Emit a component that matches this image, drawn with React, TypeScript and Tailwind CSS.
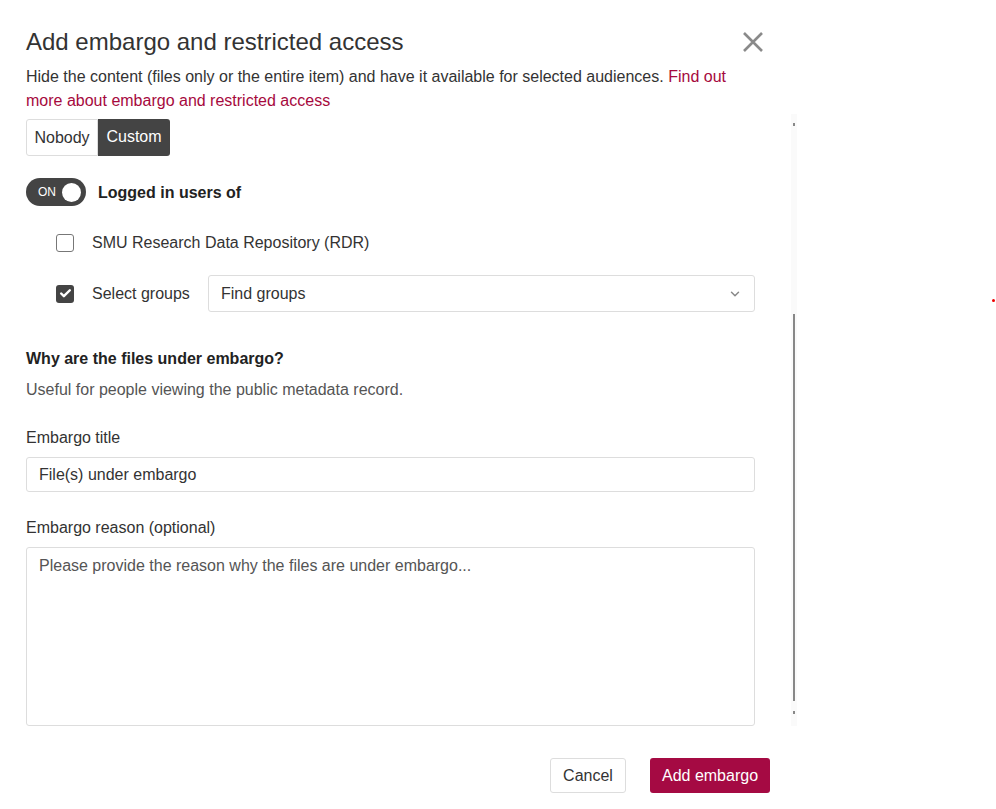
import { Check, ChevronDown } from 'lucide-react';

const font = { fontFamily: '"Liberation Sans", Arial, sans-serif' };

export default function App() {
  return (
    <div className="relative h-[809px] w-full bg-white text-[#333]" style={font}>
      {/* stray red dot in the page */}
      <span className="absolute left-[992px] top-[299px] h-[3px] w-[3px] rounded-full bg-[#e00]" />

      <div className="w-[797px] pl-[26px] pt-[27px]">
        {/* Header */}
        <div className="flex w-[738px] items-center justify-between">
          <h2 className="text-[24px] leading-[30px] text-[#333]">Add embargo and restricted access</h2>
          <button type="button" aria-label="Close" className="text-[#8a8a8a]">
            <svg width="22" height="22" viewBox="0 0 22 22">
              <path d="M2 2 L20 20 M20 2 L2 20" stroke="currentColor" strokeWidth="2.6" />
            </svg>
          </button>
        </div>
        <p className="mt-[8px] w-[720px] text-[16px] leading-[24px]">
          Hide the content (files only or the entire item) and have it available for selected audiences.{' '}
          <span className="text-[#a6093d]">Find out more about embargo and restricted access</span>
        </p>

        {/* Scrollable body */}
        <div className="flex">
          <div className="w-[729px]">
            <div className="mt-[6px] flex h-[37px] text-[16px]">
              <button type="button" className="w-[72px] rounded-l-[3px] border border-[#ddd] bg-white text-[#333]">
                Nobody
              </button>
              <button type="button" className="w-[72px] rounded-r-[3px] bg-[#444] pb-[2px] text-white">
                Custom
              </button>
            </div>

            <div className="mt-[22px] flex items-center gap-[12px]">
              <div className="flex h-[28px] w-[60px] items-center justify-between rounded-full bg-[#444] pl-[12px] pr-[5px]">
                <span className="text-[12px] text-white">ON</span>
                <span className="h-[19px] w-[19px] rounded-full bg-white" />
              </div>
              <span className="pt-[1px] text-[16px] font-bold text-[#222]">Logged in users of</span>
            </div>

            <div className="mt-[25px] flex h-[24px] items-center pl-[30px]">
              <span className="h-[18px] w-[18px] rounded-[3px] border border-[#777] bg-white" />
              <span className="ml-[18px] text-[16px]">SMU Research Data Repository (RDR)</span>
            </div>

            <div className="mt-[20px] flex items-center pl-[30px]">
              <span className="flex h-[18px] w-[18px] shrink-0 items-center justify-center rounded-[3px] bg-[#444]">
                <Check className="h-[13px] w-[13px] text-white" strokeWidth={4.5} />
              </span>
              <span className="ml-[18px] w-[116px] shrink-0 text-[16px]">Select groups</span>
              <div className="flex h-[37px] flex-1 items-center justify-between rounded-[3px] border border-[#ddd] pl-[12px] pr-[12px]">
                <span className="text-[16px]">Find groups</span>
                <ChevronDown className="h-[14px] w-[14px] text-[#888]" strokeWidth={2.5} />
              </div>
            </div>

            <h3 className="mt-[35px] text-[16px] font-bold leading-[24px] text-[#222]">
              Why are the files under embargo?
            </h3>
            <p className="mt-[7px] text-[16px] leading-[24px] text-[#555]">
              Useful for people viewing the public metadata record.
            </p>

            <label className="mt-[24px] block text-[16px] leading-[24px]">Embargo title</label>
            <div className="mt-[7px] flex h-[35px] items-center rounded-[3px] border border-[#ddd] px-[12px] text-[16px]">
              File(s) under embargo
            </div>

            <label className="mt-[24px] block text-[16px] leading-[24px]">Embargo reason (optional)</label>
            <div className="mt-[7px] h-[179px] rounded-[3px] border border-[#ddd] px-[12px] pt-[7px] text-[16px] leading-[22px] text-[#555]">
              Please provide the reason why the files are under embargo...
            </div>
          </div>

          {/* scrollbar */}
          <div className="ml-[36px] mt-[1px] flex w-[6px] flex-col items-center bg-[#fafafa]">
            <span className="mt-[9px] h-[3px] w-[2px] bg-[#888]" />
            <span className="mt-[188px] h-[387px] w-[2px] bg-[#888]" />
            <span className="mt-[10px] h-[3px] w-[2px] bg-[#888]" />
          </div>
        </div>

        {/* Footer */}
        <div className="mt-[32px] flex w-[744px] justify-end gap-[24px]">
          <button type="button" className="h-[35px] w-[76px] rounded-[3px] border border-[#ddd] bg-white text-[16px] text-[#333]">
            Cancel
          </button>
          <button type="button" className="h-[35px] w-[120px] rounded-[3px] bg-[#a50a43] text-[16px] text-white">
            Add embargo
          </button>
        </div>
      </div>
    </div>
  );
}
